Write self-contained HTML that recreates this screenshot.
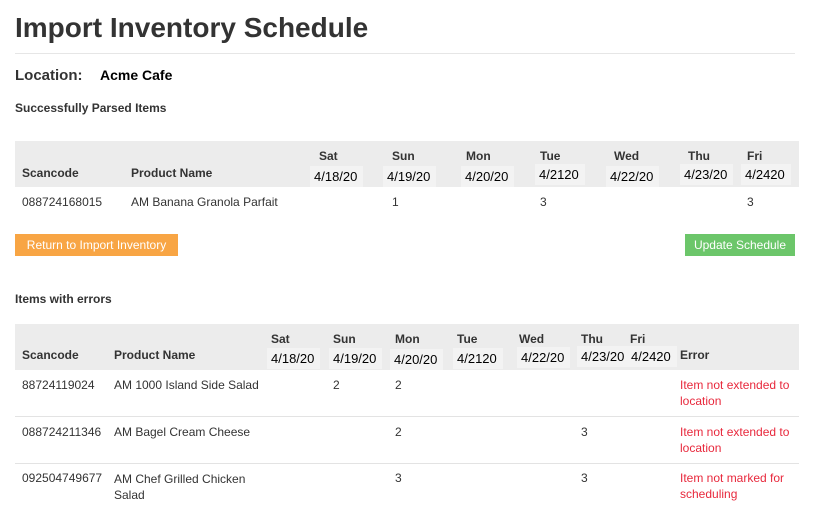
<html><head><style>
body{margin:0;width:819px;height:523px;background:#fff;font-family:"Liberation Sans",sans-serif;color:#333;position:relative;overflow:hidden}
div,span{position:absolute;white-space:nowrap}
.h{font-weight:bold;font-size:12px;color:#333}
.d{font-size:13px;color:#000;background:#f3f3f3;padding:3px 6px 3px 4px;font-family:"Liberation Sans",sans-serif}
.t{font-size:12px;color:#333}
.e{font-size:12px;color:#e8283c;line-height:16px}
</style></head><body>
<div style="left:15px;top:12px;font-size:28px;font-weight:bold;color:#333">Import Inventory Schedule</div>
<div style="left:15px;top:53px;width:780px;height:1px;background:#e6e6e6"></div>
<div style="left:15px;top:67px;font-size:15px;font-weight:bold;color:#333">Location:</div>
<div style="left:100px;top:67px;font-size:14px;font-weight:bold;color:#000">Acme Cafe</div>
<div style="left:15px;top:101px;font-size:12px;font-weight:bold">Successfully Parsed Items</div>

<div style="left:15px;top:141px;width:784px;height:46px;background:#ececec"></div>
<div class="h" style="left:22px;top:166px">Scancode</div>
<div class="h" style="left:131px;top:166px">Product Name</div>
<div class="h" style="left:319px;top:149px">Sat</div>
<div class="h" style="left:392px;top:149px">Sun</div>
<div class="h" style="left:466px;top:149px">Mon</div>
<div class="h" style="left:540px;top:149px">Tue</div>
<div class="h" style="left:614px;top:149px">Wed</div>
<div class="h" style="left:688px;top:149px">Thu</div>
<div class="h" style="left:747px;top:149px">Fri</div>
<div class="d" style="left:310px;top:166px">4/18/20</div>
<div class="d" style="left:383px;top:166px">4/19/20</div>
<div class="d" style="left:461px;top:166px">4/20/20</div>
<div class="d" style="left:535px;top:164px">4/2120</div>
<div class="d" style="left:606px;top:166px">4/22/20</div>
<div class="d" style="left:680px;top:164px">4/23/20</div>
<div class="d" style="left:741px;top:164px">4/2420</div>
<div class="t" style="left:22px;top:195px">088724168015</div>
<div class="t" style="left:131px;top:195px">AM Banana Granola Parfait</div>
<div class="t" style="left:392px;top:195px">1</div>
<div class="t" style="left:540px;top:195px">3</div>
<div class="t" style="left:747px;top:195px">3</div>

<div style="left:15px;top:234px;width:163px;height:22px;background:#f8a544;color:#fff;font-size:12px;line-height:22px;text-align:center">Return to Import Inventory</div>
<div style="left:685px;top:234px;width:110px;height:22px;background:#6cc66a;color:#fff;font-size:12px;line-height:22px;text-align:center">Update Schedule</div>

<div style="left:15px;top:292px;font-size:12px;font-weight:bold">Items with errors</div>
<div style="left:15px;top:324px;width:784px;height:46px;background:#ececec"></div>
<div class="h" style="left:22px;top:348px">Scancode</div>
<div class="h" style="left:114px;top:348px">Product Name</div>
<div class="h" style="left:271px;top:332px">Sat</div>
<div class="h" style="left:333px;top:332px">Sun</div>
<div class="h" style="left:395px;top:332px">Mon</div>
<div class="h" style="left:457px;top:332px">Tue</div>
<div class="h" style="left:519px;top:332px">Wed</div>
<div class="h" style="left:581px;top:332px">Thu</div>
<div class="h" style="left:630px;top:332px">Fri</div>
<div class="h" style="left:680px;top:348px">Error</div>
<div class="d" style="left:267px;top:348px">4/18/20</div>
<div class="d" style="left:329px;top:348px">4/19/20</div>
<div class="d" style="left:390px;top:349px">4/20/20</div>
<div class="d" style="left:453px;top:348px">4/2120</div>
<div class="d" style="left:517px;top:347px">4/22/20</div>
<div class="d" style="left:577px;top:346px">4/23/20</div>
<div class="d" style="left:627px;top:346px">4/2420</div>

<div class="t" style="left:22px;top:378px">88724119024</div>
<div class="t" style="left:114px;top:378px">AM 1000 Island Side Salad</div>
<div class="t" style="left:333px;top:378px">2</div>
<div class="t" style="left:395px;top:378px">2</div>
<div class="e" style="left:680px;top:377px">Item not extended to<br>location</div>
<div style="left:15px;top:416px;width:784px;height:1px;background:#e3e3e3"></div>
<div class="t" style="left:22px;top:425px">088724211346</div>
<div class="t" style="left:114px;top:425px">AM Bagel Cream Cheese</div>
<div class="t" style="left:395px;top:425px">2</div>
<div class="t" style="left:581px;top:425px">3</div>
<div class="e" style="left:680px;top:424px">Item not extended to<br>location</div>
<div style="left:15px;top:463px;width:784px;height:1px;background:#e3e3e3"></div>
<div class="t" style="left:22px;top:471px">092504749677</div>
<div class="t" style="left:114px;top:471px;line-height:16px">AM Chef Grilled Chicken<br>Salad</div>
<div class="t" style="left:395px;top:471px">3</div>
<div class="t" style="left:581px;top:471px">3</div>
<div class="e" style="left:680px;top:470px">Item not marked for<br>scheduling</div>
</body></html>
